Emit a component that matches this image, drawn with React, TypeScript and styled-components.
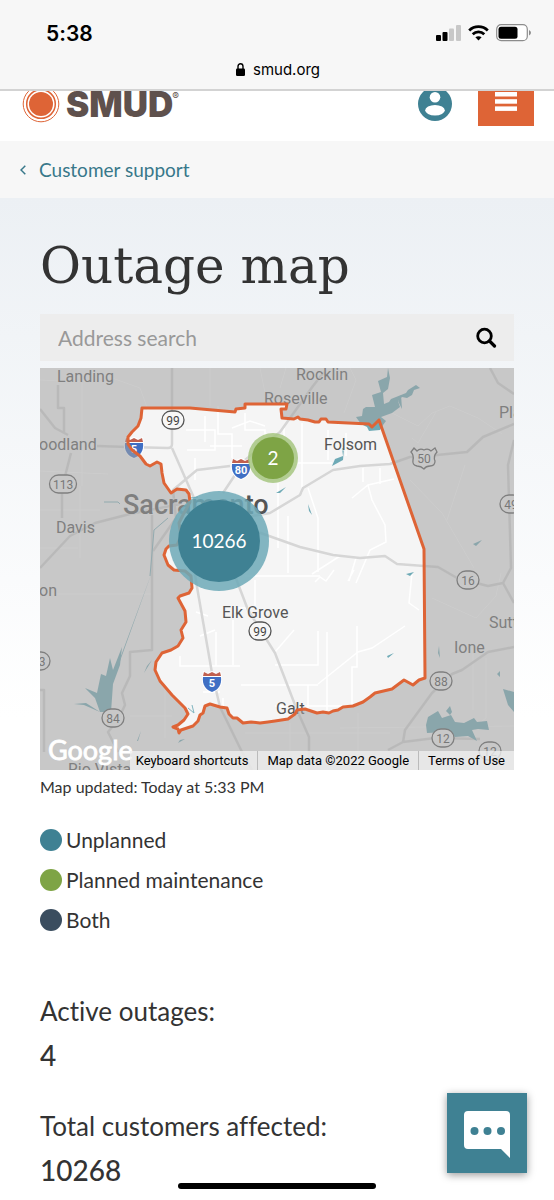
import React from "react";
import styled, { createGlobalStyle } from "styled-components";

const teal = "#3f8193";
const orange = "#de6436";
const green = "#7ea445";
const navy = "#3a4d5f";

const GlobalStyle = createGlobalStyle`
  *, *::before, *::after { box-sizing: border-box; }
  body { margin: 0; background: #fff; color: #333; font-family: Lato, "Open Sans", sans-serif; font-variant-ligatures: none; }
  button { font: inherit; color: inherit; border: 0; padding: 0; background: none; cursor: pointer; }
`;

const Page = styled.div`
  min-height: 100vh;
`;

const BrowserBar = styled.div`
  height: 91px;
  background: #f7f7f7;
  border-bottom: 2px solid #d3d3d3;
  color: #000;
  font-family: Inter, Roboto, sans-serif;
`;

const StatusRow = styled.div`
  display: flex;
  justify-content: space-between;
  align-items: center;
  height: 56px;
  padding: 10px 23px 0 46px;
`;

const Clock = styled.span`
  font-size: 21px;
  font-weight: 600;
`;

const StatusIcons = styled.div`
  display: flex;
  align-items: center;
  gap: 7px;
`;

const UrlRow = styled.div`
  display: flex;
  justify-content: center;
  align-items: center;
  gap: 8px;
  height: 26px;
  padding-left: 2px;
  font-size: 15px;
`;

const SiteHeader = styled.header`
  display: flex;
  align-items: flex-end;
  height: 50px;
  padding: 0 20px 15px 22px;
  overflow: hidden;
  background: #fff;
`;

const Logo = styled.a`
  display: flex;
  align-items: center;
  gap: 6px;
  height: 44px;
  margin-right: auto;
  color: #5f514d;
  font-family: Inter, "Liberation Sans", sans-serif;
  font-size: 35px;
  font-weight: 900;
  line-height: 26px;
  text-decoration: none;
  sup { align-self: flex-start; margin: 9px 0 0 -7px; font-size: 10px; font-weight: 400; line-height: 10px; }
`;

const AccountButton = styled.button`
  display: flex;
  align-items: center;
  height: 44px;
  margin-right: 26px;
`;

const MenuButton = styled.button`
  display: flex;
  justify-content: center;
  align-items: center;
  width: 56px;
  height: 56px;
  padding-top: 6px;
  background: ${orange};
`;

const Breadcrumb = styled.nav`
  display: flex;
  align-items: center;
  height: 57px;
  padding: 0 20px;
  background: #f7f7f7;
`;

const BackLink = styled.a`
  display: flex;
  align-items: center;
  gap: 13px;
  color: #38788a;
  font-size: 19px;
  line-height: 24px;
  text-decoration: none;
`;

const Main = styled.main`
  padding: 36px 40px 0;
  background: linear-gradient(#ecf0f4, #fff 520px);
`;

const Title = styled.h1`
  margin: 0 0 16px;
  color: #333;
  font-family: "DejaVu Serif", serif;
  font-size: 50px;
  font-weight: 400;
  line-height: 64px;
`;

const SearchForm = styled.form`
  display: flex;
  align-items: center;
  height: 47px;
  margin-bottom: 7px;
  padding: 0 17px 0 18px;
  background: #ededed;
`;

const SearchInput = styled.input`
  flex: 1;
  min-width: 0;
  border: 0;
  padding: 0;
  outline: 0;
  background: none;
  color: #333;
  font: 21px Lato, sans-serif;
  &::placeholder { color: #999; opacity: 1; }
`;

const IconButton = styled.button`
  display: flex;
`;

const MapFrame = styled.section`
  position: relative;
  height: 402px;
  overflow: hidden;
  background: #c8c8c8;
`;

const MapDrawing = styled.svg`
  display: block;
  width: 100%;
  height: 100%;
  font-family: Roboto, sans-serif;
`;

const MapCredits = styled.div`
  position: absolute;
  right: 0;
  bottom: 0;
  display: flex;
  height: 19px;
  background: rgba(240, 240, 240, 0.78);
  color: #000;
  font-family: Roboto, sans-serif;
  font-size: 13px;
  line-height: 20px;
  white-space: nowrap;
  > * { padding: 0 9px; color: #000; text-decoration: none; }
  > :first-child { padding-left: 6px; }
  > * + * { border-left: 1px solid #bbb; }
`;

const MapUpdated = styled.p`
  margin: 7px 0 0;
  font-size: 16px;
  line-height: 20px;
`;

const Legend = styled.ul`
  margin: 23px 0 0;
  padding: 0;
  list-style: none;
`;

const LegendItem = styled.li`
  display: flex;
  align-items: center;
  gap: 4px;
  height: 40px;
  font-size: 21px;
  line-height: 28px;
`;

const Dot = styled.span<{ $color: string }>`
  width: 22px;
  height: 22px;
  border-radius: 50%;
  background: ${(p) => p.$color};
`;

const Stats = styled.dl`
  margin: 53px 0 0;
  font-size: 26px;
  line-height: 36px;
`;

const StatLabel = styled.dt`
  margin-bottom: 8px;
`;

const StatValue = styled.dd`
  margin: 0 0 35px;
  font-size: 28px;
  font-weight: 500;
  &:last-child { margin-bottom: 0; }
`;

const ChatButton = styled.button`
  position: fixed;
  right: 27px;
  bottom: 27px;
  display: flex;
  justify-content: center;
  align-items: center;
  width: 80px;
  height: 80px;
  padding-top: 4px;
  background: ${teal};
  box-shadow: 0 2px 8px rgba(0, 0, 0, 0.4);
`;

const HomeIndicator = styled.div`
  position: fixed;
  bottom: 11px;
  left: 50%;
  width: 198px;
  height: 6px;
  margin-left: -99px;
  border-radius: 3px;
  background: #000;
`;

const boundary =
  "M102 40L101 50L98 58L92 64L88 69L88 76L92 82L100 88L106 96L110 98L117 94L121 96L122 105L124 115L131 125L137 121L146 122L149 126L150 134L143 147L139 155L141 168L137 177L129 178L126 181L124 187L128 197L134 202L145 203L151 208L152 220L149 225L140 228L138 230L145 243L146 254L141 262L143 270L138 278L131 282L122 285L116 294L115 302L120 313L132 327L145 340L148 346L144 352L138 357L133 359L138 361L139 365L141 362L147 360L153 358L158 353L160 347L163 345L165 338L170 336L180 339L187 340L189 346L193 350L197 350L203 355L211 354L220 355L228 354L235 353L248 351L255 346L257 342L265 341L277 345L283 344L289 345L293 343L298 342L303 339L313 338L323 334L330 329L335 325L352 321L364 312L373 317L379 312L385 310L384 181L339 52L337 54L332 59L329 56L288 54L286 51L281 51L279 54L275 54L268 52L260 51L258 49L254 51L242 50L241 41L246 41L247 36L205 36L205 40L196 41L195 44L150 40Z";

const highways = [
  "M132 0V76Q132 80 128 80L88 79L57 78",
  "M132 80L154 130",
  "M0 41L15 60L28 67M18 17V40H24V65",
  "M31 85L22 120V150",
  "M0 200L30 168L55 155L90 146L140 136",
  "M113 183L136 150L133 122L157 102L190 98",
  "M112 147V282L90 284V308L82 325L85 337L78 352L68 364L78 384",
  "M183 125L205 92L240 64L273 18L284 4",
  "M200 150L230 145L260 127L263 120L293 102L320 98L350 96L370 89L397 87L427 84L443 69L474 56",
  "M215 163L260 179L293 187L320 190L345 188L357 196L398 199L417 210L448 218L463 215L474 235M463 215L471 200L468 97L474 72",
  "M192 200L208 242L235 285L257 342L269 369V402",
  "M154 200L157 219L172 305L180 339L202 384L212 402",
  "M450 0L458 15L474 26",
  "M474 279L448 284L422 302L412 306L392 325L365 362L363 374L395 370L440 371M363 374L348 382",
  "M0 322H4V384",
];

const streets = [
  "M146 62H175V82H147M165 48V74M170 78H202M178 38V66H192V90M205 45V62H225V85M155 90V112M262 55V125M288 62V92",
  "M192 60L210 53L225 58M244 60V75M306 65V88M252 95H292M238 112V180M248 148V205M268 120L278 150V204M205 208H280",
  "M323 100V114M340 100V116M354 111L328 117L312 130M328 117L332 132L345 157L346 174L330 182L316 215",
  "M300 188L272 206M275 214L280 209L286 213L294 202M308 213L314 202M316 190L309 213",
  "M372 205L369 235L379 242M365 258L332 280L318 284L278 316M235 284L254 262",
  "M278 263V297H235M287 264V342M317 258V299H312V336M201 317H278M235 338H315M195 244V240H215V212",
  "M140 288V298H200M176 264V298M193 252V297M156 244L168 248M160 268L175 262M163 324H180M268 317V342M183 330V338",
];

const outerStreets = [
  "M0 12L42 14V118M0 103L68 106M40 118V190M0 142H60M72 10L100 20L108 42M0 180H38",
  "M170 0V38M220 0L226 30M246 0L240 20M304 45L316 12L310 0M350 44L378 58L392 45L410 38L438 50L462 66",
  "M372 70L378 75L396 44M370 112L402 145L434 200M425 97L407 152M392 230L436 250L456 228L461 205",
  "M433 342V285M446 290V350L420 370M300 360L474 358M0 226H112M250 355V402M205 365H350M318 345V402M90 348H132M125 318V370",
];

const water = [
  "M348 0L347 9L338 13L341 24L332 27L335 39L326 39L323 41L322 48L316 49L321 56L327 59L329 63L340 62L343 57L346 53L341 49L352 45L360 39L358 33L362 29L367 30L372 27L374 22L380 20L376 17L368 22L366 25L361 27L351 31L349 34L344 36L343 25L348 21L350 10Z",
  "M361 27L362 41L358 33Z",
  "M302 80H304L303 92L292 98L295 91L303 88Z",
  "M386 357L388 349L398 343L402 350L411 347L415 354L424 355L434 350L437 354L447 353L449 362L438 361L432 362L437 373L428 368L415 369L407 364L387 365Z",
  "M406 343L410 338L412 344L410 347ZM463 321L474 324V344L468 337ZM457 306L460 303V309Z",
  "M82 279L80 297L73 316L71 344H60L55 330L45 320L57 325L61 306L66 308L70 290L73 302Z",
  "M112 204L78 296L80 293ZM60 344L44 337L34 336L46 335Z",
  "M101 363L98 373H97ZM145 371L138 375L140 372ZM112 292L104 305L107 298Z",
  "M236 125L246 119L240 125ZM268 136L272 147L269 143ZM366 206L374 204L370 208ZM347 288L354 285L348 290ZM399 278L400 290L398 285ZM433 176L442 172L436 178Z",
];

const riverLines = [
  "M64 134L78 134L80 136M110 208L114 162L128 150",
  "M148 340L154 345L152 337M150 130L158 129",
];

const cities: [string, number, number][] = [
  ["Landing", 17, 14],
  ["Rocklin", 256, 12],
  ["Roseville", 224, 36],
  ["oodland", -1, 82],
  ["Davis", 16, 165],
  ["Folsom", 284, 82],
  ["Pla", 459, 50],
  ["Elk Grove", 182, 250],
  ["on", -1, 228],
  ["Sutt", 449, 260],
  ["Ione", 414, 285],
  ["Galt", 236, 346],
  ["Rio Vista", 28, 407],
];

const routes: [string, number, number][] = [
  ["99", 133, 52],
  ["113", 23, 116],
  ["99", 220, 263],
  ["16", 428, 212],
  ["88", 401, 313],
  ["84", 73, 350],
  ["12", 403, 370],
  ["12", 450, 383],
  ["49", 471, 136],
  ["3", -1, 293],
];

const interstates: [string, number, number][] = [
  ["5", 94, 80],
  ["80", 201, 101],
  ["5", 172, 314],
];

function RouteBadge({ label, x, y }: { label: string; x: number; y: number }) {
  const w = label.length > 2 ? 27 : 22;
  return (
    <g transform={`translate(${x} ${y})`}>
      <rect x={-w / 2} y={-9} width={w} height={18} rx={9} fill="#f7f7f7" stroke="#555" strokeWidth={1.3} />
      <text x={label.length > 1 ? 0 : 3} y={5} textAnchor="middle" fontSize={12} fill="#444">{label}</text>
    </g>
  );
}

function InterstateShield({ label, x, y }: { label: string; x: number; y: number }) {
  return (
    <g transform={`translate(${x} ${y})`}>
      <path d="M-9 -11L-5 -9L0 -11L5 -9L9 -11L10 -4C11 4 6 9 0 11C-6 9 -11 4 -10 -4Z" fill="#fff" />
      <path d="M-8 -10L-4 -8L0 -10L4 -8L8 -10L9 -6H-9Z" fill="#c0604f" />
      <path d="M-9 -5H9C10 3 6 8 0 10C-6 8 -10 3 -9 -5Z" fill="#3f6fc4" />
      <text y={5} textAnchor="middle" fontSize={11} fontWeight={700} fill="#fff">{label}</text>
    </g>
  );
}

type ClusterProps = { label: string; x: number; y: number; r: number; halo: number; color: string; haloColor: string };

function Cluster({ label, x, y, r, halo, color, haloColor }: ClusterProps) {
  return (
    <g>
      <circle cx={x} cy={y} r={halo} fill={haloColor} opacity={0.85} />
      <circle cx={x} cy={y} r={r} fill={color} />
      <text x={x} y={y + 7} textAnchor="middle" fontFamily="Lato, sans-serif" fontSize={19} fill="#fff">{label}</text>
    </g>
  );
}

function OutageMap() {
  return (
    <MapFrame aria-label="Outage map">
      <MapDrawing viewBox="0 0 474 402" preserveAspectRatio="xMidYMid slice">
        <rect width={474} height={402} fill="#f5f5f5" />
        <g fill="none" stroke="#fff" strokeWidth={1.5}>
          {streets.map((d) => <path key={d} d={d} />)}
        </g>
        <g fill="none" stroke="#fff" strokeWidth={1}>
          {outerStreets.map((d) => <path key={d} d={d} />)}
        </g>
        <g fill="none" stroke="#d6d6d6" strokeWidth={2.5} strokeLinejoin="round">
          {highways.map((d) => <path key={d} d={d} />)}
        </g>
        <g fill="#6eaab6">
          {water.map((d) => <path key={d} d={d} />)}
        </g>
        <g fill="none" stroke="#7fb4bf" strokeWidth={1}>
          {riverLines.map((d) => <path key={d} d={d} />)}
        </g>
        {interstates.map(([label, x, y]) => <InterstateShield key={label + x} label={label} x={x} y={y} />)}
        {routes.map(([label, x, y]) => <RouteBadge key={label + x} label={label} x={x} y={y} />)}
        <path d="M374 80L377 83Q380 80 384 82Q388 80 391 83L395 80L397 84Q393 88 395 93Q395 98 390 98Q386 98 384 101Q381 98 377 98Q372 97 373 92Q374 87 371 84Z" fill="#f7f7f7" stroke="#555" strokeWidth={1.3} />
        <text x={384} y={95} textAnchor="middle" fontSize={12} fill="#444">50</text>
        <g fontSize={16} fill="#555" stroke="#f5f5f5" strokeWidth={2} strokeOpacity={0.5} paintOrder="stroke">
          {cities.map(([name, x, y]) => <text key={name} x={x} y={y}>{name}</text>)}
          <text x={83} y={146} fontSize={27} fontWeight={500}>Sacramento</text>
        </g>
        <path d={"M0 0H474V402H0Z" + boundary} fillRule="evenodd" fill="#a3a3a3" fillOpacity={0.55} />
        <path d={boundary} fill="none" stroke={orange} strokeWidth={3} strokeLinejoin="round" />
        <Cluster label="10266" x={179} y={173} r={41} halo={50} color={teal} haloColor="#6da9b7" />
        <Cluster label="2" x={233} y={90} r={21} halo={25} color={green} haloColor="#a6c680" />
        <text x={8} y={392} fontFamily="Lato, sans-serif" fontSize={27} fill="#fff" stroke="#fff" strokeWidth={0.8}>Google</text>
      </MapDrawing>
      <MapCredits>
        <button type="button">Keyboard shortcuts</button>
        <span>Map data ©2022 Google</span>
        <a href="#terms">Terms of Use</a>
      </MapCredits>
    </MapFrame>
  );
}

export default function App() {
  return (
    <Page>
      <GlobalStyle />
      <BrowserBar>
        <StatusRow>
          <Clock>5:38</Clock>
          <StatusIcons>
            <svg width="25" height="16" viewBox="0 0 25 16">
              <rect x="0" y="10" width="5" height="6" rx="1" />
              <rect x="6.5" y="7" width="5" height="9" rx="1" />
              <rect x="13" y="3.5" width="5" height="12.5" rx="1" fill="#c8c8c8" />
              <rect x="20" y="0" width="5" height="16" rx="1" fill="#c8c8c8" />
            </svg>
            <svg width="21" height="16" viewBox="0 0 21 16" fill="none" stroke="#000" strokeWidth="2.8">
              <path d="M1.2 5.4C6.4 0.4 14.6 0.4 19.8 5.4" />
              <path d="M4.7 9.2C8 6.2 13 6.2 16.3 9.2" />
              <path d="M7.4 12.3C9.2 10.8 11.8 10.8 13.6 12.3L10.5 15.6Z" fill="#000" stroke="none" />
            </svg>
            <svg width="35" height="18" viewBox="0 0 35 18">
              <rect x="0.7" y="0.7" width="30.6" height="16" rx="4.5" fill="#fff" stroke="#8c8c8c" strokeWidth="1.2" />
              <rect x="2.5" y="2.7" width="19" height="12" rx="2.5" />
              <path d="M33 6Q35 7 35 8.7T33 11.4Z" fill="#8c8c8c" />
            </svg>
          </StatusIcons>
        </StatusRow>
        <UrlRow>
          <svg width="9" height="13" viewBox="0 0 9 13">
            <rect y="5.5" width="9" height="7.5" rx="1.3" />
            <path d="M2 6V3.5A2.5 2.7 0 0 1 7 3.5V6" fill="none" stroke="#000" strokeWidth="1.4" />
          </svg>
          <span>smud.org</span>
        </UrlRow>
      </BrowserBar>

      <SiteHeader>
        <Logo href="#home" aria-label="SMUD home">
          <svg width="38" height="38" viewBox="0 0 38 38" fill="none" stroke={orange}>
            <circle cx="19" cy="19" r="12" fill={orange} stroke="none" />
            <circle cx="19" cy="19" r="14.3" strokeWidth="1.5" />
            <circle cx="19" cy="19" r="17.8" strokeWidth="1" />
          </svg>
          SMUD
          <sup>®</sup>
        </Logo>
        <AccountButton type="button" aria-label="My account">
          <svg width="34" height="34" viewBox="0 0 34 34">
            <circle cx="17" cy="17" r="17" fill={teal} />
            <circle cx="17" cy="10.3" r="5.3" fill="#fff" />
            <ellipse cx="17" cy="23.3" rx="9.8" ry="5.3" fill="#fff" />
          </svg>
        </AccountButton>
        <MenuButton type="button" aria-label="Menu">
          <svg width="22" height="19" viewBox="0 0 22 19" fill="#fff">
            <rect width="22" height="4.5" />
            <rect y="7.2" width="22" height="4.5" />
            <rect y="14.4" width="22" height="4.5" />
          </svg>
        </MenuButton>
      </SiteHeader>

      <Breadcrumb>
        <BackLink href="#support">
          <svg width="6" height="10" viewBox="0 0 6 10" fill="none" stroke="currentColor" strokeWidth="1.5">
            <path d="M5.3 0.7L1 5L5.3 9.3" />
          </svg>
          Customer support
        </BackLink>
      </Breadcrumb>

      <Main>
        <Title>Outage map</Title>
        <SearchForm onSubmit={(e) => e.preventDefault()}>
          <SearchInput type="text" placeholder="Address search" aria-label="Address search" />
          <IconButton type="submit" aria-label="Search">
            <svg width="21" height="21" viewBox="0 0 21 21" fill="none" stroke="#000" strokeWidth="2.8">
              <circle cx="8.5" cy="9" r="6.8" />
              <path d="M13.5 14L18.5 19" strokeWidth="3.2" strokeLinecap="round" />
            </svg>
          </IconButton>
        </SearchForm>
        <OutageMap />
        <MapUpdated>Map updated: Today at 5:33 PM</MapUpdated>
        <Legend>
          <LegendItem><Dot $color={teal} />Unplanned</LegendItem>
          <LegendItem><Dot $color={green} />Planned maintenance</LegendItem>
          <LegendItem><Dot $color={navy} />Both</LegendItem>
        </Legend>
        <Stats>
          <StatLabel>Active outages:</StatLabel>
          <StatValue>4</StatValue>
          <StatLabel>Total customers affected:</StatLabel>
          <StatValue>10268</StatValue>
        </Stats>
      </Main>

      <ChatButton type="button" aria-label="Open chat">
        <svg width="48" height="48" viewBox="0 0 48 48">
          <path d="M5 0H43Q47 0 47 4V47L38 38H5Q1 38 1 34V4Q1 0 5 0Z" fill="#fff" />
          <g fill={teal}>
            <circle cx="11.5" cy="20" r="4" />
            <circle cx="24.5" cy="20" r="4" />
            <circle cx="38" cy="20" r="4" />
          </g>
        </svg>
      </ChatButton>
      <HomeIndicator />
    </Page>
  );
}
